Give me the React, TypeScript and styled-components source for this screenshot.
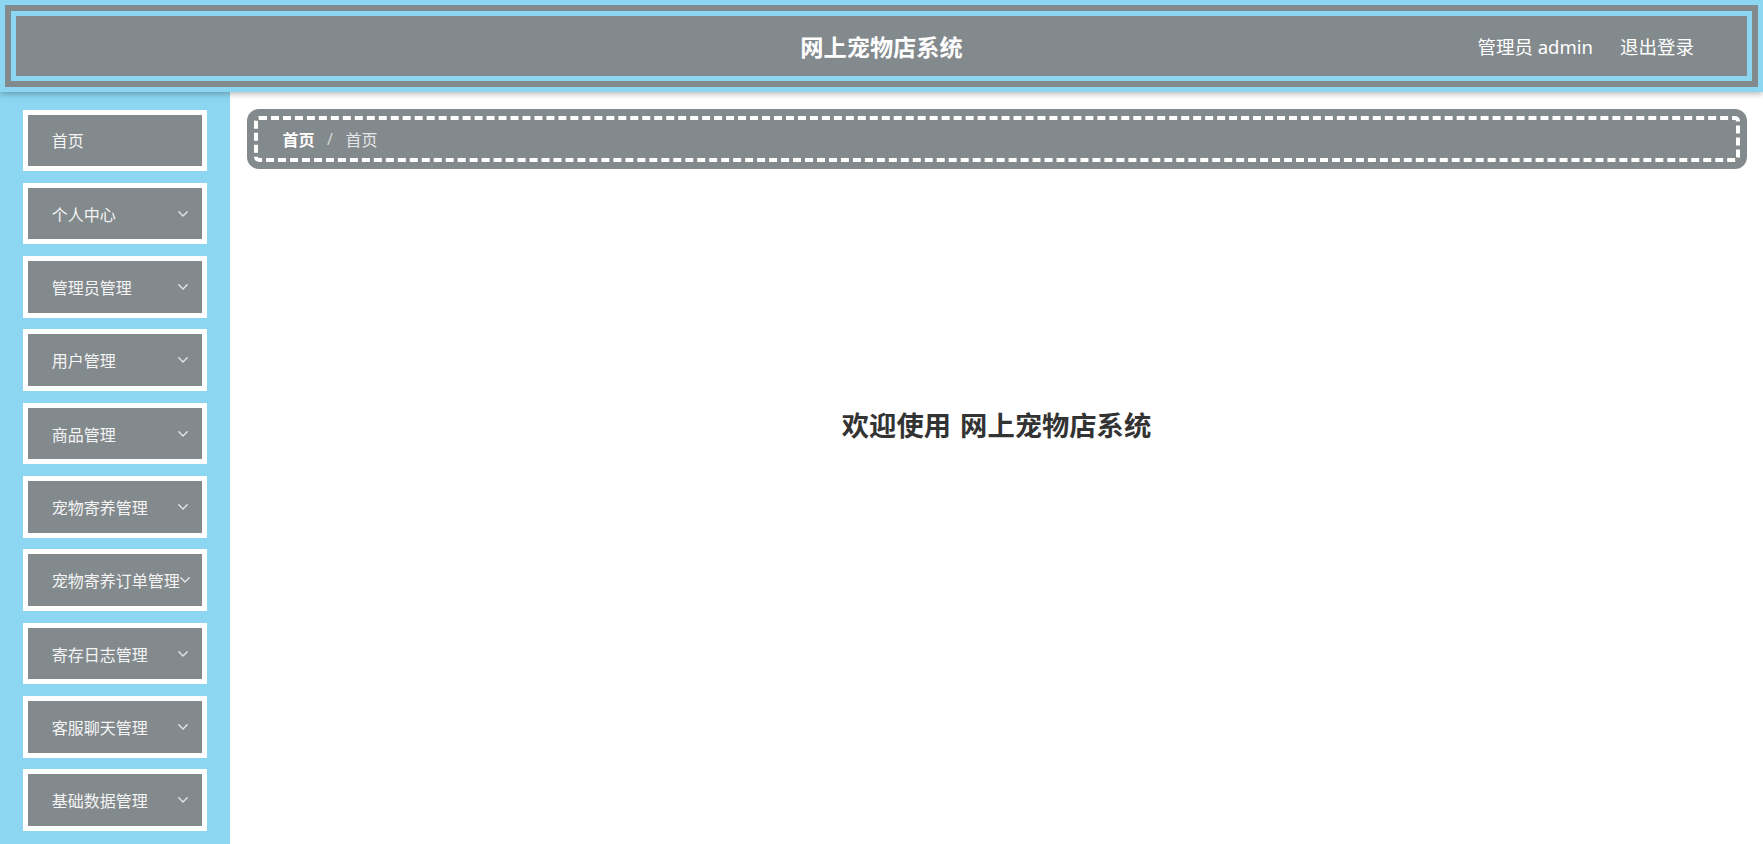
import React from "react";
import styled, { createGlobalStyle } from "styled-components";

const GRAY = "#838a8d";
const SKY = "#8dd6f1";
const FONT = `"Noto Sans", "Noto Sans CJK SC", sans-serif`;

const GlobalStyle = createGlobalStyle`
  html, body {
    margin: 0;
    padding: 0;
    height: 100%;
    overflow: hidden;
    background: #fff;
    font-family: ${FONT};
  }
  #root {
    height: 100%;
  }
`;

const Page = styled.div`
  height: 100vh;
  display: flex;
  flex-direction: column;
  overflow: hidden;
`;

const Header = styled.header`
  position: relative;
  z-index: 2;
  flex: none;
  background: ${SKY};
  padding: 5px;
  box-shadow: 0 2px 6px rgba(0, 0, 0, 0.28);
`;

const HeaderFrame = styled.div`
  border: 6px solid ${GRAY};
  padding: 5px;
`;

const HeaderBar = styled.div`
  height: 60px;
  background: ${GRAY};
  display: grid;
  grid-template-columns: 1fr auto 1fr;
  align-items: center;
`;

const Title = styled.h1`
  grid-column: 2;
  margin: 0;
  font-size: 23.2px;
  font-weight: 700;
  color: #fff;
`;

const UserArea = styled.div`
  grid-column: 3;
  justify-self: end;
  display: flex;
  align-items: center;
  gap: 27px;
  padding-right: 53px;
  color: #fff;
  font-size: 18.5px;
`;

const UserLink = styled.span`
  cursor: pointer;
  white-space: nowrap;
`;

const Body = styled.div`
  flex: 1;
  min-height: 0;
  display: flex;
`;

const Sidebar = styled.nav`
  flex: none;
  width: 230px;
  background: ${SKY};
  padding-top: 17.5px;
  overflow: hidden;
  display: flex;
  flex-direction: column;
  align-items: center;
  gap: 11.67px;
`;

const MenuItem = styled.div`
  flex: none;
  box-sizing: border-box;
  width: 184.5px;
  height: 61.67px;
  border: 5.67px solid #fff;
  background: ${GRAY};
  display: flex;
  align-items: center;
  padding: 0 14px 0 24px;
  color: #f4f4f4;
  font-size: 16px;
  white-space: nowrap;
  cursor: pointer;
`;

const Label = styled.span`
  flex: none;
`;

const Chevron = styled.svg`
  flex: none;
  margin-left: auto;
  width: 10px;
  height: 6px;
`;

const Main = styled.main`
  flex: 1;
  min-width: 0;
  padding: 16.5px 16.5px 0;
`;

const Crumbs = styled.div`
  box-sizing: border-box;
  height: 60px;
  background: ${GRAY};
  border-radius: 12px;
  padding: 7px;
`;

const CrumbsInner = styled.div`
  box-sizing: border-box;
  height: 100%;
  border: 4px dashed #fff;
  border-radius: 5px;
  display: flex;
  align-items: center;
  padding-left: 25px;
  font-size: 16px;
`;

const Crumb = styled.span<{ $current?: boolean }>`
  color: ${(p) => (p.$current ? "#e4e6e7" : "#fff")};
  font-weight: ${(p) => (p.$current ? 400 : 700)};
`;

const Sep = styled.span`
  margin: 0 12.5px;
  color: #d4d7d8;
`;

const Welcome = styled.h2`
  margin: 237.5px 0 0;
  text-align: center;
  font-size: 27.3px;
  line-height: 40px;
  font-weight: 700;
  word-spacing: 2px;
  color: #333;
`;

type Item = { label: string; sub: boolean };

const menu: Item[] = [
  { label: "首页", sub: false },
  { label: "个人中心", sub: true },
  { label: "管理员管理", sub: true },
  { label: "用户管理", sub: true },
  { label: "商品管理", sub: true },
  { label: "宠物寄养管理", sub: true },
  { label: "宠物寄养订单管理", sub: true },
  { label: "寄存日志管理", sub: true },
  { label: "客服聊天管理", sub: true },
  { label: "基础数据管理", sub: true },
];

const ArrowDown = () => (
  <Chevron viewBox="0 0 10 6" fill="none">
    <polyline
      points="0.8,0.8 5,5 9.2,0.8"
      stroke="#e6e8e9"
      strokeWidth="1.3"
      strokeLinecap="round"
      strokeLinejoin="round"
    />
  </Chevron>
);

export default function App() {
  return (
    <Page>
      <GlobalStyle />
      <Header>
        <HeaderFrame>
          <HeaderBar>
            <Title>网上宠物店系统</Title>
            <UserArea>
              <UserLink>管理员 admin</UserLink>
              <UserLink>退出登录</UserLink>
            </UserArea>
          </HeaderBar>
        </HeaderFrame>
      </Header>
      <Body>
        <Sidebar>
          {menu.map((m) => (
            <MenuItem key={m.label}>
              <Label>{m.label}</Label>
              {m.sub && <ArrowDown />}
            </MenuItem>
          ))}
        </Sidebar>
        <Main>
          <Crumbs>
            <CrumbsInner>
              <Crumb>首页</Crumb>
              <Sep>/</Sep>
              <Crumb $current>首页</Crumb>
            </CrumbsInner>
          </Crumbs>
          <Welcome>欢迎使用 网上宠物店系统</Welcome>
        </Main>
      </Body>
    </Page>
  );
}
